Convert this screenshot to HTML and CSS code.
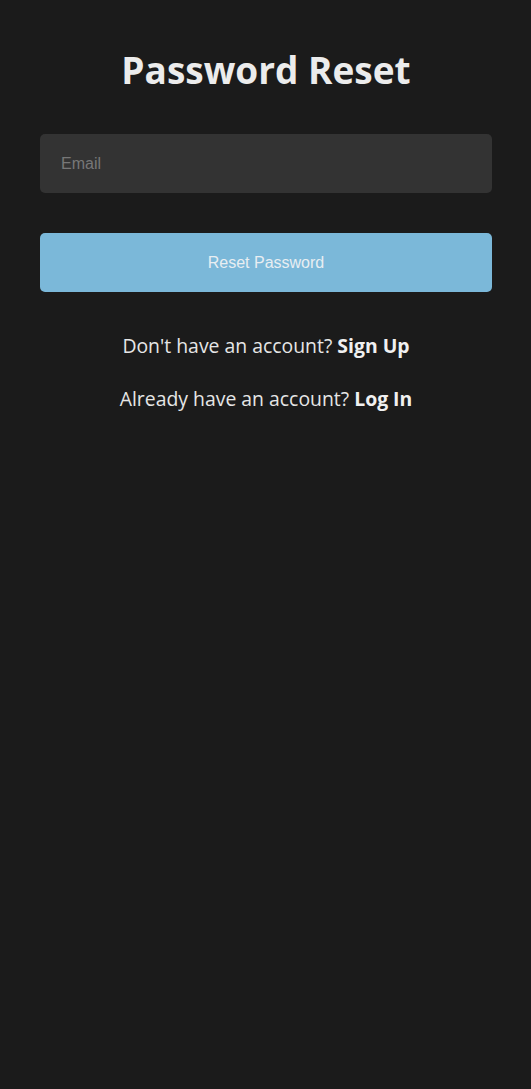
FILE: index.html
```html
<!DOCTYPE html>
<html lang="en">
<head>
<meta charset="utf-8">
<title>Password Reset</title>
<link rel="stylesheet" href="styles.css">
</head>
<body>
<main class="page">
  <h1 class="title">Password Reset</h1>
  <form class="form">
    <input class="field" type="email" placeholder="Email">
    <button class="btn" type="button">Reset Password</button>
  </form>
  <p class="alt">Don't have an account? <a class="alt-link" href="#">Sign Up</a></p>
  <p class="alt">Already have an account? <a class="alt-link" href="#">Log In</a></p>
</main>
</body>
</html>
```
FILE: styles.css
```css
html, body {
  margin: 0;
  padding: 0;
  background: #1b1b1b;
  min-height: 100%;
}
body {
  font-family: "Open Sans", "Noto Sans", sans-serif;
  color: #e6e6e6;
}
.page {
  padding: 44px 39px 0 40px;
  display: flex;
  flex-direction: column;
  align-items: stretch;
}
.title {
  margin: 0;
  text-align: center;
  font-size: 37px;
  line-height: 52px;
  font-weight: 700;
  color: #ececec;
}
.form {
  margin-top: 38px;
  display: flex;
  flex-direction: column;
  gap: 40px;
}
.field {
  box-sizing: border-box;
  height: 59px;
  width: 100%;
  border: none;
  border-radius: 5px;
  background: #333333;
  padding: 0 21px;
  font-family: "Liberation Sans", Arial, sans-serif;
  font-size: 16px;
  color: #e6e6e6;
  outline: none;
}
.field::placeholder {
  color: #777777;
}
.btn {
  box-sizing: border-box;
  height: 59px;
  width: 100%;
  border: none;
  border-radius: 5px;
  background: #7bb8d9;
  color: #e8eef2;
  font-family: "Liberation Sans", Arial, sans-serif;
  font-size: 16px;
}
.alt {
  margin: 0;
  text-align: center;
  font-size: 19.4px;
  line-height: 26px;
}
.alt:first-of-type {
  margin-top: 41px;
}
.alt + .alt {
  margin-top: 27px;
}
.alt-link {
  color: #f0f0f0;
  font-weight: 700;
  text-decoration: none;
}
```
